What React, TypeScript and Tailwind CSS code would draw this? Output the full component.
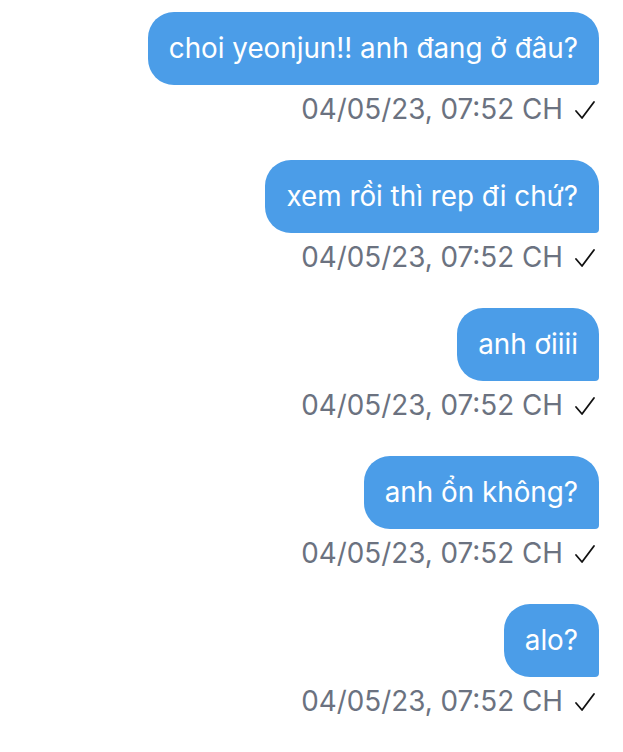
import React from "react";

const messages = [
  "choi yeonjun!! anh đang ở đâu?",
  "xem rồi thì rep đi chứ?",
  "anh ơiiii",
  "anh ổn không?",
  "alo?",
];

function Check() {
  return (
    <svg width="22" height="22" viewBox="0 0 22 22" className="shrink-0 mr-[3px]">
      <polyline points="2,12 8,19 20,3" fill="none" stroke="#111" strokeWidth="1.8" strokeLinecap="round" strokeLinejoin="round" />
    </svg>
  );
}

export default function App() {
  return (
    <div className="w-[623px] h-[752px] bg-white pt-[12px] pr-[24px] flex flex-col items-end" style={{ fontFamily: "Inter, 'Liberation Sans', sans-serif" }}>
      {messages.map((m, i) => (
        <div key={i} className="flex flex-col items-end mb-[25px]">
          <div className="h-[73px] flex items-center px-[21px] bg-[#4b9de8] text-white text-[27.8px] rounded-[26px] rounded-br-[4px]">
            {m}
          </div>
          <div className="h-[50px] flex items-center gap-[11px] text-[27.8px] text-[#6b7280]">
            <span>04/05/23, 07:52 CH</span>
            <Check />
          </div>
        </div>
      ))}
    </div>
  );
}
